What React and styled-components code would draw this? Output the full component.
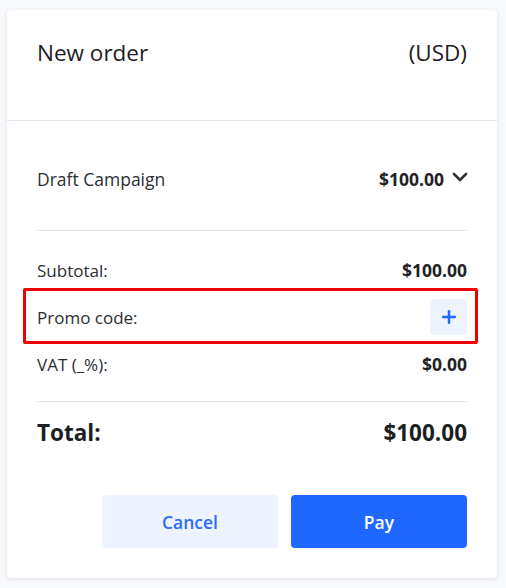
import styled, { createGlobalStyle } from "styled-components";
import { ChevronDown, Plus } from "lucide-react";

const GlobalStyle = createGlobalStyle`
  body {
    margin: 0;
    background: #f8f9fc;
    font-family: "Open Sans", "Noto Sans", sans-serif;
    color: #212529;
  }
`;

function App() {
  return (
    <>
      <GlobalStyle />
      <Page>
        <Card>
          <Header>
            <Title>New order</Title>
            <Title>(USD)</Title>
          </Header>
          <Body>
            <Row>
              <Label $size={17.5}>Draft Campaign</Label>
              <ItemValue>
                <Value>$100.00</Value>
                <ChevronDown size={24} strokeWidth={2.6} color="#333" />
              </ItemValue>
            </Row>
            <Divider $top={37} $bottom={25} />
            <Row>
              <Label>Subtotal:</Label>
              <Value>$100.00</Value>
            </Row>
            <PromoRow>
              <Label>Promo code:</Label>
              <IconButton>
                <Plus size={20} strokeWidth={3} />
              </IconButton>
            </PromoRow>
            <Row>
              <Label>VAT (_%):</Label>
              <Value>$0.00</Value>
            </Row>
            <Divider $top={23} $bottom={14} />
            <TotalRow>
              <span>Total:</span>
              <span>$100.00</span>
            </TotalRow>
            <Actions>
              <Button>Cancel</Button>
              <Button $primary>Pay</Button>
            </Actions>
          </Body>
        </Card>
      </Page>
    </>
  );
}

const Page = styled.div`
  padding: 10px 9px 10px 7px;
`;

const Card = styled.div`
  background: #fff;
  border-radius: 4px;
  box-shadow: 0 1px 4px rgba(30, 40, 70, 0.12);
`;

const Header = styled.div`
  height: 111px;
  box-sizing: border-box;
  padding: 28px 30px 0;
  display: flex;
  justify-content: space-between;
  align-items: flex-start;
  border-bottom: 1px solid #e3e5e8;
`;

const Title = styled.span`
  font-size: 22.5px;
  line-height: 30px;
  color: #1d2024;
`;

const Body = styled.div`
  padding: 44px 30px 30px;
  display: flex;
  flex-direction: column;
`;

const Row = styled.div`
  display: flex;
  justify-content: space-between;
  align-items: center;
  height: 28px;
`;

const ItemValue = styled.div`
  display: flex;
  align-items: center;
  gap: 4px;

  svg {
    margin-top: -4px;
    margin-right: -5px;
  }
`;

const Label = styled.span`
  font-size: ${(p) => p.$size ?? 17}px;
  color: #2a2e33;
`;

const Value = styled.span`
  font-size: 17.5px;
  font-weight: 700;
  color: #1f2226;
`;

const Divider = styled.div`
  height: 1px;
  background: #e3e5e8;
  margin: ${(p) => p.$top}px 0 ${(p) => p.$bottom}px;
`;

const PromoRow = styled(Row)`
  position: relative;
  height: 36px;
  margin: 15px 0;

  &::after {
    content: "";
    position: absolute;
    left: -14px;
    right: -11px;
    top: -11px;
    bottom: -9px;
    border: 3px solid #f00000;
    border-radius: 2px;
    pointer-events: none;
  }
`;

const IconButton = styled.button`
  width: 37px;
  height: 36px;
  border: none;
  border-radius: 4px;
  background: #edf3ff;
  color: #1e68ff;
  display: flex;
  align-items: center;
  justify-content: center;
  padding: 0;
`;

const TotalRow = styled.div`
  display: flex;
  justify-content: space-between;
  align-items: center;
  height: 32px;
  font-size: 22.5px;
  font-weight: 700;
  color: #1b1e22;
`;

const Actions = styled.div`
  display: flex;
  justify-content: flex-end;
  gap: 13px;
  margin-top: 47px;
`;

const Button = styled.button`
  width: 176px;
  height: 53px;
  border: none;
  border-radius: 4px;
  font-family: inherit;
  font-size: 17.5px;
  font-weight: 600;
  background: ${(p) => (p.$primary ? "#1e68ff" : "#edf3ff")};
  color: ${(p) => (p.$primary ? "#fff" : "#2f6cf6")};
`;

export default App;
